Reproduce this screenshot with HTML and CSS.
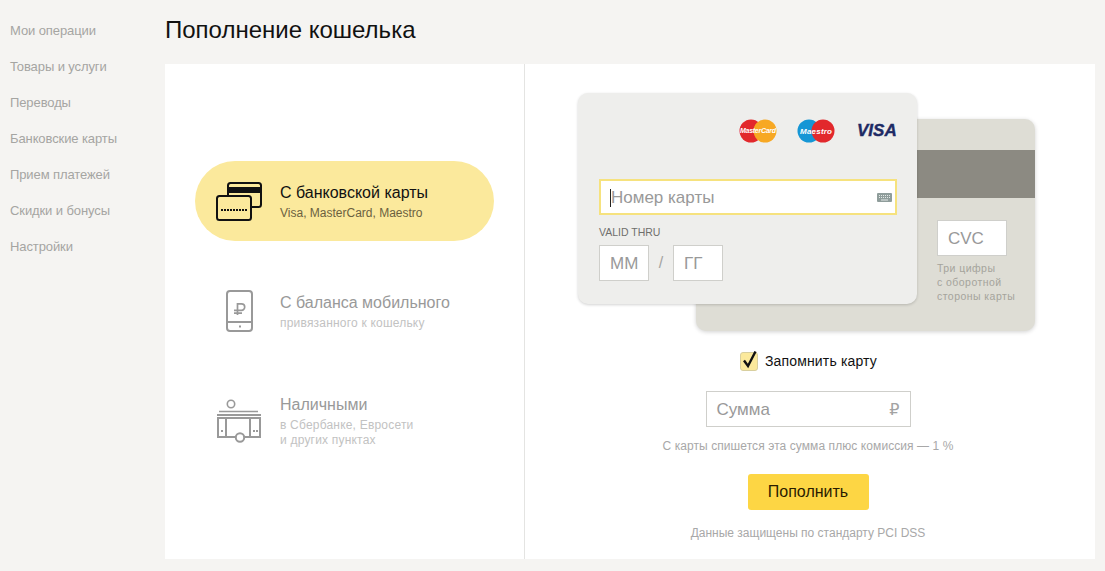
FILE: index.html
```html
<!DOCTYPE html>
<html lang="ru">
<head>
  <meta charset="UTF-8">
  <meta name="viewport" content="width=device-width, initial-scale=1.0">
  <title>Пополнение кошелька</title>
  <link rel="stylesheet" href="styles.css">
</head>
<body>
  <!-- Sidebar -->
  <ul class="side-menu">
    <li>Мои операции</li>
    <li>Товары и услуги</li>
    <li>Переводы</li>
    <li>Банковские карты</li>
    <li>Прием платежей</li>
    <li>Скидки и бонусы</li>
    <li>Настройки</li>
  </ul>

  <div class="content">
    <h1 class="page-title">Пополнение кошелька</h1>

    <div class="panel">
      <!-- Payment sources -->
      <div class="sources">
        <div class="source source-active">
          <svg class="source-icon" width="46" height="40" viewBox="0 0 46 40">
            <rect x="12" y="2" width="33" height="24" rx="2.5" fill="none" stroke="#111" stroke-width="2"/>
            <rect x="12" y="6" width="33" height="6" fill="#111"/>
            <rect x="1" y="15" width="34" height="24" rx="2.5" fill="#fbe99c" stroke="#111" stroke-width="2"/>
            <line x1="5" y1="29" x2="31" y2="29" stroke="#111" stroke-width="2" stroke-dasharray="2 1"/>
          </svg>
          <div class="source-text">
            <div class="source-title">С банковской карты</div>
            <div class="source-sub">Visa, MasterCard, Maestro</div>
          </div>
        </div>

        <div class="source">
          <svg class="source-icon" width="46" height="44" viewBox="0 0 46 44">
            <rect x="11" y="0" width="25" height="40" rx="3" fill="none" stroke="#999" stroke-width="2"/>
            <line x1="11" y1="31" x2="36" y2="31" stroke="#999" stroke-width="2"/>
            <rect x="23" y="34.5" width="2" height="2" fill="#999"/>
            <path d="M21.5 24V12.9H25.5a3.2 3.2 0 0 1 0 6.4H18M18 22.2H26" fill="none" stroke="#999" stroke-width="1.7"/>
          </svg>
          <div class="source-text">
            <div class="source-title">С баланса мобильного</div>
            <div class="source-sub">привязанного к кошельку</div>
          </div>
        </div>

        <div class="source">
          <svg class="source-icon" width="46" height="52" viewBox="0 0 46 52">
            <circle cx="15" cy="11" r="3.7" fill="none" stroke="#999" stroke-width="1.6"/>
            <line x1="3" y1="18.5" x2="42" y2="18.5" stroke="#999" stroke-width="1.4"/>
            <line x1="1" y1="22" x2="45" y2="22" stroke="#999" stroke-width="2"/>
            <rect x="2" y="25" width="42" height="19" fill="none" stroke="#999" stroke-width="2"/>
            <line x1="10" y1="25" x2="10" y2="44" stroke="#999" stroke-width="2"/>
            <line x1="34" y1="25" x2="34" y2="44" stroke="#999" stroke-width="2"/>
            <rect x="5" y="37" width="2" height="2" fill="#999"/>
            <rect x="37" y="37" width="2" height="2" fill="#999"/>
            <rect x="40" y="37" width="2" height="2" fill="#999"/>
            <circle cx="24" cy="44.5" r="4.2" fill="#fff" stroke="#999" stroke-width="2"/>
          </svg>
          <div class="source-text">
            <div class="source-title">Наличными</div>
            <div class="source-sub">в Сбербанке, Евросети<br>и других пунктах</div>
          </div>
        </div>
      </div>

      <!-- Card form -->
      <div class="pay">
        <div class="cards">
          <div class="card-back">
            <div class="card-stripe"></div>
            <div class="cvc-box">
              <div class="field cvc-field">CVC</div>
              <div class="cvc-hint">Три цифры<br>с оборотной<br>стороны карты</div>
            </div>
          </div>

          <div class="card-front">
            <div class="brands">
              <svg width="38" height="24" viewBox="0 0 38 24">
                <circle cx="12" cy="12" r="11.5" fill="#e2282c"/>
                <circle cx="26" cy="12" r="11.5" fill="#f7a823"/>
                <text x="19" y="14.4" class="brand-mark" textLength="36">MasterCard</text>
              </svg>
              <svg width="38" height="24" viewBox="0 0 38 24">
                <circle cx="12" cy="12" r="11.5" fill="#1596d5"/>
                <circle cx="26" cy="12" r="11.5" fill="#e2282c"/>
                <text x="19" y="14.6" class="brand-mark maestro" textLength="32">Maestro</text>
              </svg>
              <span class="visa">VISA</span>
            </div>

            <div class="number-field">
              <span class="caret"></span>
              <span class="number-text">Номер карты</span>
              <svg class="keyboard" width="15" height="9" viewBox="0 0 15 9">
                <rect width="15" height="9" rx="1" fill="#8f9d9b"/>
                <path d="M2 2.5h11M2 4.5h11" stroke="#e3e8e7" stroke-width="1" stroke-dasharray="1 1"/>
                <path d="M4 7h7" stroke="#e3e8e7" stroke-width="1"/>
              </svg>
            </div>

            <div class="valid-label">VALID THRU</div>
            <div class="valid-row">
              <div class="field date-field">ММ</div>
              <span class="slash">/</span>
              <div class="field date-field">ГГ</div>
            </div>
          </div>
        </div>

        <label class="remember">
          <span class="checkbox">
            <svg width="20" height="23" viewBox="0 0 20 23">
              <path d="M4 11.5l4 5.5L15.5 2.5" fill="none" stroke="#111" stroke-width="2.4"/>
            </svg>
          </span>
          Запомнить карту
        </label>

        <div class="field sum-field">
          <span>Сумма</span>
          <span class="rub">₽</span>
        </div>

        <p class="note">С карты спишется эта сумма плюс комиссия — 1 %</p>
        <button class="submit">Пополнить</button>
        <p class="note secure">Данные защищены по стандарту PCI DSS</p>
      </div>
    </div>
  </div>
</body>
</html>
```

FILE: styles.css
```css
/* General */
body {
  margin: 0;
  height: 571px;
  overflow: hidden;
  display: flex;
  background: #f5f4f2;
  font-family: "Liberation Sans", Arial, sans-serif;
  color: #111;
}

/* Sidebar */
.side-menu {
  list-style: none;
  width: 155px;
  margin: 0;
  padding: 13px 0 0 10px;
  font-size: 13px;
  letter-spacing: -0.1px;
  color: #a5a5a2;
}

.side-menu li {
  height: 36px;
  line-height: 36px;
}

/* Main column */
.content {
  width: 930px;
}

.page-title {
  margin: 0;
  height: 64px;
  line-height: 60px;
  font-size: 24px;
  font-weight: normal;
}

.panel {
  display: flex;
  height: 495px;
  background: #fff;
}

/* Left column */
.sources {
  width: 360px;
  box-sizing: border-box;
  padding: 97px 0 0 30px;
  border-right: 1px solid #e4e4e2;
  display: flex;
  flex-direction: column;
  gap: 22px;
}

.source {
  display: flex;
  width: 299px;
  height: 80px;
  box-sizing: border-box;
  padding: 20px 0 0 21px;
  color: #999;
}

.source-active {
  margin-bottom: 8px;
  background: #fbe99c;
  border-radius: 40px;
  color: #111;
}

.source-icon {
  flex: none;
  margin-right: 18px;
  overflow: visible;
}

.source-text {
  margin-top: 1px;
}

.source-title {
  font-size: 16px;
  line-height: 22px;
}

.source-sub {
  margin-top: 2px;
  font-size: 12px;
  line-height: 15px;
  letter-spacing: 0.2px;
  color: #c2c2c2;
}

.source-active .source-sub {
  letter-spacing: 0;
  color: #6b6140;
}

/* Right column */
.pay {
  flex: 1;
  box-sizing: border-box;
  padding: 29px 4px 0 0;
  display: flex;
  flex-direction: column;
  align-items: center;
}

.cards {
  display: grid;
  align-self: flex-start;
  margin-left: 53px;
}

.card-front,
.card-back {
  grid-area: 1 / 1;
  width: 339px;
  box-sizing: border-box;
  border-radius: 10px;
}

.card-front {
  height: 211px;
  padding: 26px 20px 0 21px;
  background: #eeeeec;
  box-shadow: 0 1px 3px rgba(0, 0, 0, 0.18);
}

.card-back {
  height: 212px;
  margin: 26px 0 0 118px;
  padding-top: 31px;
  background: #deddd5;
  box-shadow: 0 1px 4px rgba(0, 0, 0, 0.18);
}

.card-stripe {
  height: 48px;
  background: #8c8a82;
}

.cvc-box {
  padding: 22px 0 0 241px;
}

.cvc-field {
  width: 70px;
  padding-left: 10px;
}

.cvc-hint {
  margin-top: 5px;
  font-size: 10.5px;
  line-height: 14px;
  letter-spacing: 0.45px;
  color: #a5a49c;
  white-space: nowrap;
}

.brands {
  display: flex;
  justify-content: flex-end;
  align-items: center;
  gap: 20px;
  height: 24px;
}

.brand-mark {
  font-family: "Liberation Sans", Arial, sans-serif;
  font-size: 7px;
  font-weight: bold;
  font-style: italic;
  fill: #fff;
  text-anchor: middle;
}

.maestro {
  font-size: 8px;
}

.visa {
  width: 40px;
  margin-left: 2px;
  font-size: 17px;
  font-weight: bold;
  font-style: italic;
  color: #1d2a64;
  -webkit-text-stroke: 0.4px #1d2a64;
}

.number-field {
  display: flex;
  align-items: center;
  height: 36px;
  box-sizing: border-box;
  margin-top: 36px;
  padding: 1px 3px 0 9px;
  background: #fff;
  border: 2px solid #f6e27e;
  font-size: 17px;
  color: #999;
}

.caret {
  width: 1px;
  height: 18px;
  background: #222;
}

.keyboard {
  margin-left: auto;
}

.valid-label {
  margin-top: 10px;
  font-size: 10.5px;
  line-height: 14px;
  color: #6f6f6c;
}

.valid-row {
  display: flex;
  align-items: center;
  margin-top: 6px;
}

.field {
  display: flex;
  align-items: center;
  height: 36px;
  box-sizing: border-box;
  padding-top: 1px;
  background: #fff;
  border: 1px solid #cfcfcb;
  font-size: 17px;
  color: #999;
}

.date-field {
  width: 50px;
  padding-left: 10px;
}

.slash {
  width: 24px;
  text-align: center;
  font-size: 16px;
  color: #a5a5a2;
}

.remember {
  display: flex;
  align-items: center;
  align-self: flex-start;
  margin: 21px 0 0 215px;
  line-height: 19px;
  font-size: 14px;
  letter-spacing: 0.15px;
}

.checkbox {
  position: relative;
  width: 16px;
  height: 17px;
  margin-right: 7px;
  background: #fbe99c;
  border: 1px solid #d8cf9f;
  border-radius: 3px;
}

.checkbox svg {
  position: absolute;
  left: -1px;
  top: -4px;
}

.sum-field {
  justify-content: space-between;
  width: 205px;
  margin-top: 20px;
  padding: 1px 10px 0;
}

.rub {
  font-family: "DejaVu Sans", sans-serif;
  font-size: 16px;
  color: #a3a3a3;
}

.note {
  margin: 11px 0 0;
  font-size: 12px;
  line-height: 16px;
  letter-spacing: 0.08px;
  color: #a8a8a8;
}

.submit {
  width: 121px;
  height: 36px;
  margin-top: 20px;
  border: none;
  border-radius: 3px;
  background: #fdd644;
  font-family: inherit;
  font-size: 16px;
  color: #2a1c00;
}

.note.secure {
  margin-top: 15px;
  letter-spacing: 0;
}
```
